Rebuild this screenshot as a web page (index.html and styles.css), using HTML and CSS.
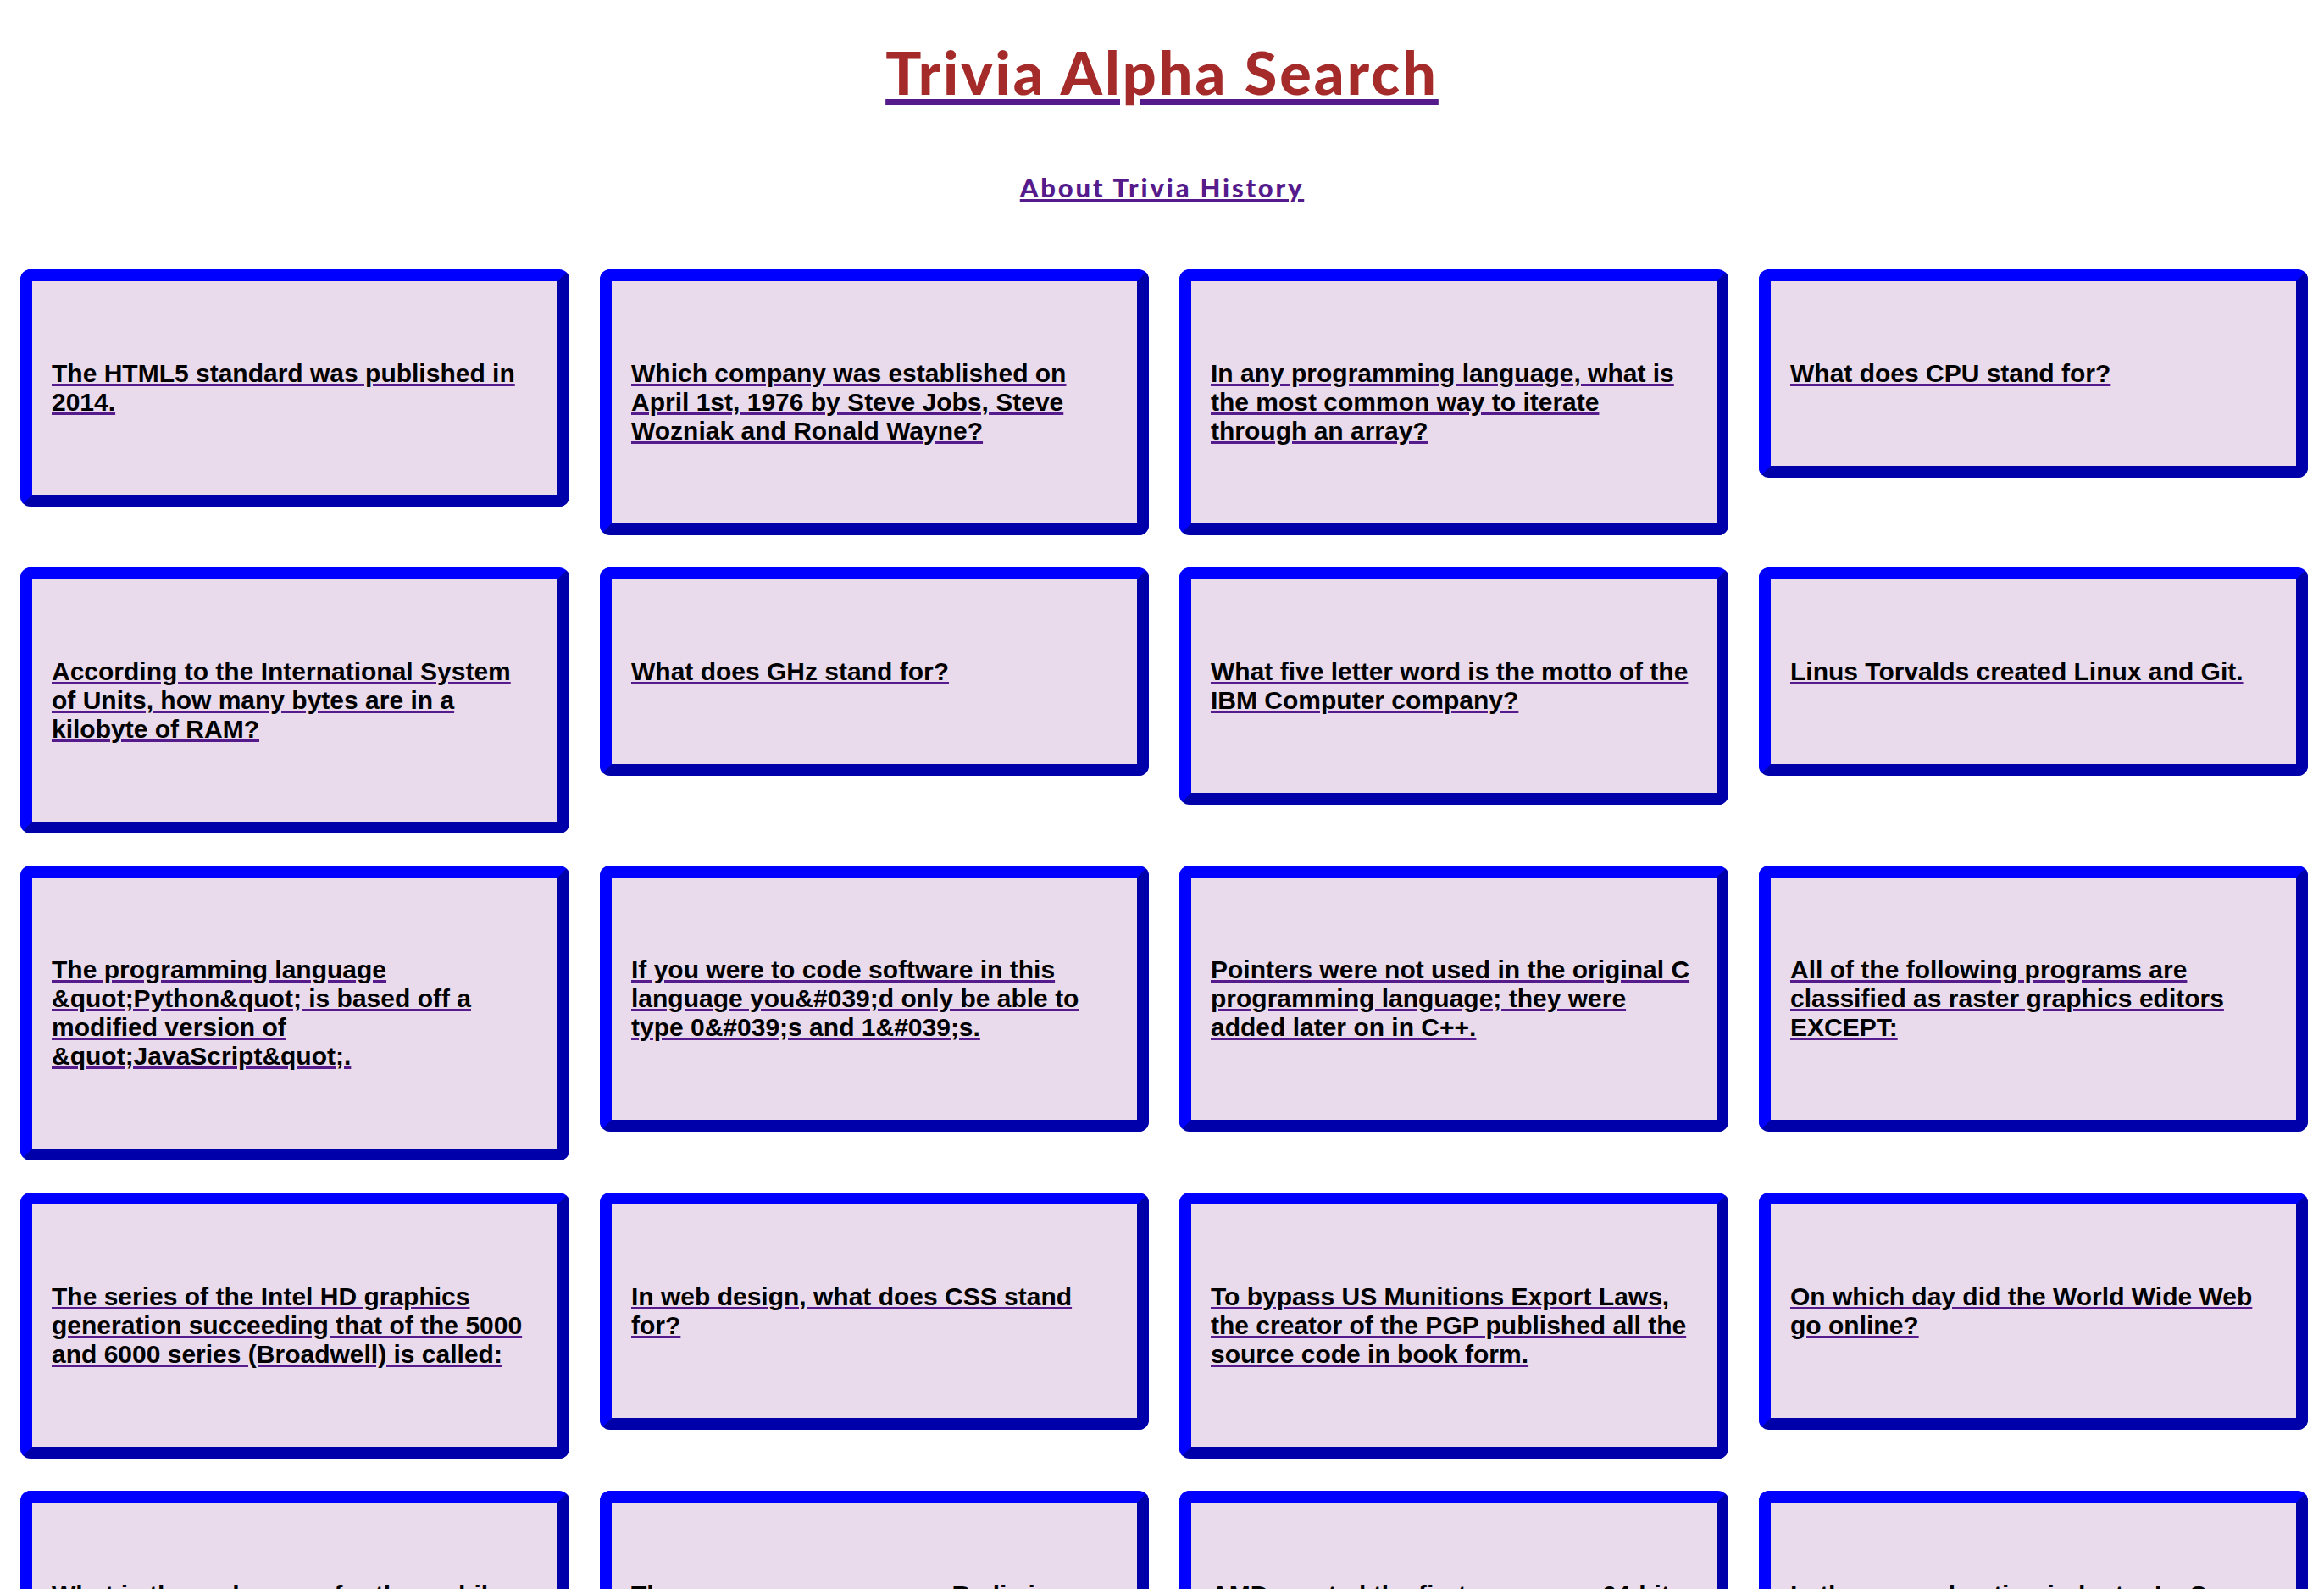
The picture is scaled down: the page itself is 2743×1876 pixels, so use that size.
FILE: index.html
```html
<!DOCTYPE html>
<html lang="en">
<head>
<meta charset="utf-8">
<title>Trivia Alpha Search</title>
<link rel="stylesheet" href="styles.css">
</head>
<body>
<header class="masthead">
  <h1 class="site-title"><a class="title-link" href="#"><span class="title-text">Trivia Alpha Search</span></a></h1>
  <p class="nav"><a class="nav-link" href="#">About Trivia History</a></p>
</header>
<main class="grid">
  <div class="card"><a class="q" href="#">The HTML5 standard was published in 2014.</a></div>
  <div class="card"><a class="q" href="#">Which company was established on April 1st, 1976 by Steve Jobs, Steve Wozniak and Ronald Wayne?</a></div>
  <div class="card"><a class="q" href="#">In any programming language, what is the most common way to iterate through an array?</a></div>
  <div class="card"><a class="q" href="#">What does CPU stand for?</a></div>

  <div class="card"><a class="q" href="#">According to the International System of Units, how many bytes are in a kilobyte of RAM?</a></div>
  <div class="card"><a class="q" href="#">What does GHz stand for?</a></div>
  <div class="card"><a class="q" href="#">What five letter word is the motto of the IBM Computer company?</a></div>
  <div class="card"><a class="q" href="#">Linus Torvalds created Linux and Git.</a></div>

  <div class="card"><a class="q" href="#">The programming language &amp;quot;Python&amp;quot; is based off a modified version of &amp;quot;JavaScript&amp;quot;.</a></div>
  <div class="card"><a class="q" href="#">If you were to code software in this language you&amp;#039;d only be able to type 0&amp;#039;s and 1&amp;#039;s.</a></div>
  <div class="card"><a class="q" href="#">Pointers were not used in the original C programming language; they were added later on in C++.</a></div>
  <div class="card"><a class="q" href="#">All of the following programs are classified as raster graphics editors EXCEPT:</a></div>

  <div class="card"><a class="q" href="#">The series of the Intel HD graphics generation succeeding that of the 5000 and 6000 series (Broadwell) is called:</a></div>
  <div class="card"><a class="q" href="#">In web design, what does CSS stand for?</a></div>
  <div class="card"><a class="q" href="#">To bypass US Munitions Export Laws, the creator of the PGP published all the source code in book form.</a></div>
  <div class="card"><a class="q" href="#">On which day did the World Wide Web go online?</a></div>

  <div class="card"><a class="q" href="#">What is the code name for the mobile operating system Android 7.0?</a></div>
  <div class="card"><a class="q" href="#">The open source program Redis is a relational database server.</a></div>
  <div class="card"><a class="q" href="#">AMD created the first consumer 64-bit processor.</a></div>
  <div class="card"><a class="q" href="#">In the server hosting industry IaaS stands for...</a></div>
</main>
</body>
</html>
```

FILE: styles.css
```css
html, body {
  margin: 0;
  padding: 0;
  background: #ffffff;
  overflow-x: hidden;
}

body {
  font-family: "Liberation Sans", Arial, sans-serif;
  scrollbar-width: none;
}

.masthead {
  text-align: center;
  padding-top: 43px;
}

.site-title {
  margin: 0;
  font-family: "Lato", "Liberation Sans", sans-serif;
  font-weight: 900;
  font-size: 70px;
  line-height: 84px;
  letter-spacing: 3px;
}

.title-link {
  color: #551a8b;
  text-decoration: underline;
  text-decoration-thickness: 7px;
  text-underline-offset: 5px;
}

.title-text {
  color: #a52a2a;
}

.nav {
  margin: 76px 0 0;
  font-family: "Lato", "Liberation Sans", sans-serif;
  font-weight: 900;
  font-size: 31px;
  line-height: 37px;
  letter-spacing: 2.8px;
}

.nav-link {
  color: #551a8b;
  text-decoration-thickness: 3px;
}

.grid {
  display: grid;
  grid-template-columns: repeat(4, 648px);
  column-gap: 36px;
  row-gap: 38px;
  align-items: start;
  padding-left: 24px;
  margin-top: 78px;
}

.card {
  border: 14px outset #0000ff;
  border-radius: 12px;
  background: #e9daec;
  padding: 92px 23px;
  font-weight: bold;
  font-size: 30px;
}

.q {
  color: #000000;
  text-decoration: underline;
  text-decoration-color: #551a8b;
  text-decoration-thickness: 3px;
}
```
